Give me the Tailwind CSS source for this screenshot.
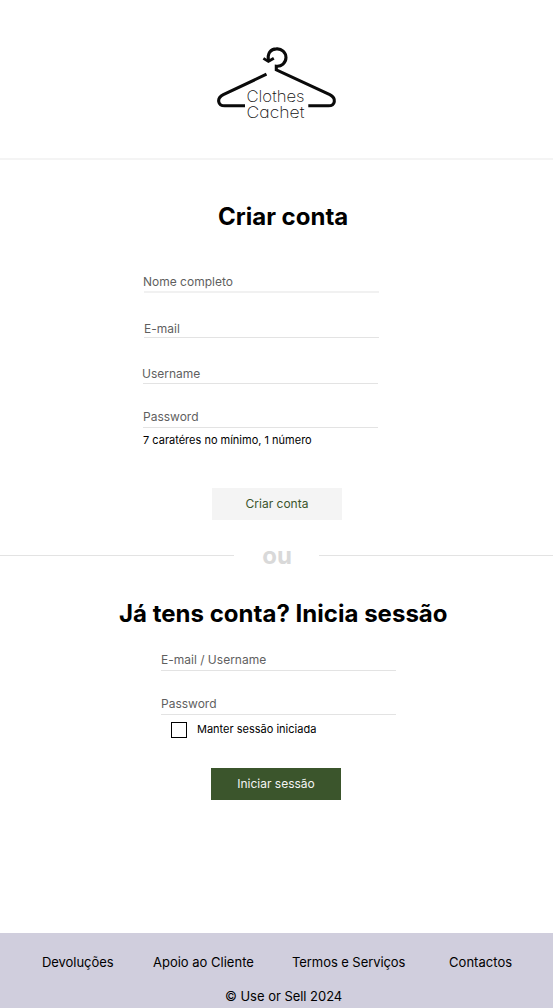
<!DOCTYPE html>
<html lang="pt">
<head>
<meta charset="utf-8">
<title>Clothes Cachet</title>
<script src="https://cdn.jsdelivr.net/npm/@tailwindcss/browser@4"></script>
</head>
<body class="bg-white">
<div class="flex h-[1008px] w-[553px] flex-col overflow-hidden bg-white font-['Inter',sans-serif] text-black">
  <header class="h-40 shrink-0 border-b-2 border-[#f4f4f4] pt-[35px] pl-[205px]">
    <svg class="h-[95px] w-[145px]" viewBox="0 0 145 95" fill="none" stroke="#0a0a0a" stroke-width="3.1">
      <path d="M63.6 26 C62 18.5 65.5 13.9 71.4 13.9 A8.7 8.7 0 1 1 71.3 31.2 V34.8 L124.8 59.7 C132 63.5 130 70.8 123.5 70.8 H103.3"/>
      <path d="M61.5 39.2 L18.3 59.7 C11 63.5 13 70.8 19.7 70.8 H40"/>
      <path stroke-width="2.8" d="M58.4 23.4 L63.4 26.4 L68.8 23.2"/>
      <g fill="#111" stroke="none" class="font-['Inter',sans-serif] font-extralight [font-feature-settings:'cv11']" font-size="15.5">
        <text x="41.5" y="66.5" textLength="58" lengthAdjust="spacingAndGlyphs">Clothes</text>
        <text x="41.5" y="82.7" textLength="58" lengthAdjust="spacingAndGlyphs">Cachet</text>
      </g>
    </svg>
  </header>
  <main class="flex h-[773px] shrink-0 flex-col">
    <h1 class="mt-[41px] ml-[218px] h-8 text-2xl leading-8 font-bold whitespace-nowrap">Criar conta</h1>
    <div class="ml-[143px] flex w-[236px] flex-col text-xs leading-4 text-[#5f5f5f]">
      <div class="mt-[41px] ml-px h-[19px] border-b-2 border-[#f1f1f1]"><span class="-ml-px block">Nome completo</span></div>
      <div class="mt-7 ml-px h-[17px] border-b border-[#e3e3e3]">E-mail</div>
      <div class="mt-7 mr-px h-[18px] border-b border-[#e3e3e3]"><span class="-ml-px block">Username</span></div>
      <div class="mt-[25px] mr-px h-[19px] border-b border-[#e3e3e3]">Password</div>
      <p class="mt-1 h-4 text-[11px] whitespace-nowrap text-black">7 caratéres no mínimo, 1 número</p>
    </div>
    <button class="mt-10 ml-[212px] h-8 w-[130px] bg-[#f4f4f4] text-xs text-[#3b552c]">Criar conta</button>
    <div class="mt-5 flex h-8 items-start">
      <div class="mt-[15px] h-px w-[234px] bg-[#e3e3e3]"></div>
      <span class="w-[85px] pl-px text-center text-2xl leading-8 font-bold text-[#d9d9d9]">ou</span>
      <div class="mt-[15px] h-px flex-1 bg-[#e3e3e3]"></div>
    </div>
    <h2 class="mt-[26px] ml-[119px] h-8 text-2xl leading-8 font-bold tracking-[0.02px] whitespace-nowrap">Já tens conta? Inicia sessão</h2>
    <div class="ml-[161px] flex w-[235px] flex-col text-xs leading-4 text-[#5f5f5f]">
      <div class="mt-[22px] h-[19px] border-b border-[#e3e3e3]">E-mail / Username</div>
      <div class="mt-[25px] h-[19px] border-b border-[#e3e3e3]">Password</div>
      <label class="mt-[7px] ml-2.5 flex h-4 items-center gap-2.5 text-[11px] whitespace-nowrap text-black"><span class="size-4 border border-black"></span><span class="-mt-0.5">Manter sessão iniciada</span></label>
    </div>
    <button class="mt-[30px] ml-[211px] h-8 w-[130px] bg-[#3b552c] text-xs text-[#f4f4f4]">Iniciar sessão</button>
  </main>
  <footer class="h-[75px] shrink-0 bg-[#d0cedd] pt-[19px] text-[13px] leading-5 whitespace-nowrap">
    <nav class="flex pl-[42px]">
      <a class="w-[111px] tracking-[-0.05px]">Devoluções</a>
      <a class="w-[139px]">Apoio ao Cliente</a>
      <a class="w-[157px] tracking-[-0.07px]">Termos e Serviços</a>
      <a class="tracking-[0.05px]">Contactos</a>
    </nav>
    <p class="mt-3.5 pl-[225px] tracking-[-0.03px]">© Use or Sell 2024</p>
  </footer>
</div>
</body>
</html>
